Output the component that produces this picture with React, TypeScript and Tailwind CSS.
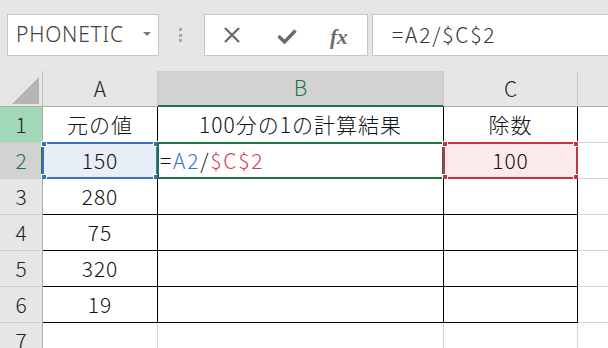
import React from "react";

const CJK = { fontFamily: '"Noto Sans CJK JP", "Noto Sans", sans-serif' };

type CellProps = {
  w: string;
  children?: React.ReactNode;
  border?: "black" | "grey";
  extra?: string;
  overlay?: React.ReactNode;
  align?: "center" | "left";
};

function Cell({ w, children, border = "black", extra = "", overlay, align = "center" }: CellProps) {
  const b = border === "black" ? "border-black" : "border-[#d4d4d4]";
  return (
    <div
      className={`relative h-full shrink-0 border-r border-b ${b} ${w} ${extra} flex items-center ${
        align === "center" ? "justify-center" : "justify-start pl-[2px]"
      } text-[21px] tracking-[1px] font-light text-[#111]`}
      style={CJK}
    >
      {children}
      {overlay}
    </div>
  );
}

function RowHead({ n, variant }: { n: number; variant?: "green" | "sel" }) {
  const bg = variant === "green" ? "bg-[#a0d8b8]" : variant === "sel" ? "bg-[#d2d2d2]" : "bg-[#e6e6e6]";
  const color = variant === "sel" ? "text-[#217346]" : "text-[#222]";
  return (
    <div
      className={`relative h-full w-[43px] shrink-0 border-r border-b border-r-[#ababab] border-b-[#cfcfcf] ${bg} ${color} flex items-center justify-center text-[21px] font-light`}
      style={CJK}
    >
      {n}
      {variant === "sel" && <div className="absolute right-[-1px] top-0 bottom-[-1px] w-[2px] bg-[#217346]" />}
    </div>
  );
}

function Handles({ color }: { color: string }) {
  const base = `absolute w-[6px] h-[6px] ${color} border border-white`;
  return (
    <>
      <div className={`${base} left-[-3px] top-[-3px]`} />
      <div className={`${base} right-[-3px] top-[-3px]`} />
      <div className={`${base} left-[-3px] bottom-[-3px]`} />
      <div className={`${base} right-[-3px] bottom-[-3px]`} />
    </>
  );
}

export default function App() {
  const data = [
    { n: 3, a: "280" },
    { n: 4, a: "75" },
    { n: 5, a: "320" },
    { n: 6, a: "19" },
  ];
  return (
    <div className="w-[608px] h-[348px] overflow-hidden bg-white flex flex-col">
      {/* Toolbar */}
      <div className="h-[71px] shrink-0 bg-[#e6e6e6] flex items-start pt-[14px] pl-[7px] overflow-hidden">
        <div className="w-[152px] h-[42px] shrink-0 bg-white border border-[#c6c6c6] flex items-center pl-[8px] relative">
          <span
            className="text-[21px] text-[#404040] tracking-[0.8px] font-light"
            style={{ fontFamily: '"Noto Sans", "Liberation Sans", sans-serif' }}
          >
            PHONETIC
          </span>
          <div className="absolute left-[135px] top-[17px] w-0 h-0 border-l-[4px] border-r-[4px] border-t-[4px] border-l-transparent border-r-transparent border-t-[#7a7a7a]" />
        </div>
        <div className="w-[45px] h-[42px] shrink-0 flex flex-col items-center justify-center gap-[2.5px] pr-[2px]">
          <div className="w-[3px] h-[3px] bg-[#a6a6a6]" />
          <div className="w-[3px] h-[3px] bg-[#a6a6a6]" />
          <div className="w-[3px] h-[3px] bg-[#a6a6a6]" />
        </div>
        <div className="w-[164px] h-[42px] shrink-0 bg-white border border-[#c6c6c6] flex items-center relative">
          <svg className="absolute left-[18px] top-[12px]" width="18" height="16" viewBox="0 0 18 16">
            <path d="M2 1 L16 15 M16 1 L2 15" stroke="#6b6b6b" strokeWidth="2.3" fill="none" />
          </svg>
          <svg className="absolute left-[72px] top-[13px]" width="20" height="16" viewBox="0 0 20 16">
            <path d="M1.5 8 L7.5 14 L18.5 2.5" stroke="#6b6b6b" strokeWidth="3.4" fill="none" strokeLinejoin="miter" />
          </svg>
          <span
            className="absolute left-[125px] top-[7px] text-[21px] italic font-bold text-[#6b6b6b]"
            style={{ fontFamily: '"Liberation Serif", "DejaVu Serif", serif' }}
          >
            fx
          </span>
        </div>
        <div className="ml-[4px] w-[260px] h-[42px] shrink-0 bg-white border border-[#c6c6c6] flex items-center pl-[19px]">
          <span className="text-[21px] tracking-[1.8px] font-light text-[#333]" style={CJK}>
            =A2/$C$2
          </span>
        </div>
      </div>

      {/* Column header */}
      <div className="h-[36px] shrink-0 flex bg-[#e6e6e6]">
        <div className="relative w-[43px] h-full shrink-0 border-r border-b border-r-[#bdbdbd] border-b-[#ababab]">
          <svg className="absolute left-[11px] top-[5px]" width="29" height="29" viewBox="0 0 29 29">
            <polygon points="28,1 28,28 1,28" fill="#b4b4b4" />
          </svg>
        </div>
        <div className="w-[115px] h-full shrink-0 border-r border-b border-r-[#c6c6c6] border-b-[#ababab] flex items-center justify-center text-[21px] font-light text-[#222]" style={CJK}>
          A
        </div>
        <div className="w-[286px] h-full shrink-0 border-r border-r-[#c6c6c6] bg-[#d2d2d2] border-b-2 border-b-[#217346] flex items-center justify-center text-[21px] font-light text-[#217346]" style={CJK}>
          B
        </div>
        <div className="w-[134px] h-full shrink-0 border-r border-b border-r-[#c6c6c6] border-b-[#ababab] flex items-center justify-center text-[21px] font-light text-[#222]" style={CJK}>
          C
        </div>
        <div className="flex-1 h-full border-b border-b-[#ababab]" />
      </div>

      {/* Row 1 */}
      <div className="h-[36px] shrink-0 flex">
        <RowHead n={1} variant="green" />
        <Cell w="w-[115px]">元の値</Cell>
        <Cell w="w-[286px]">100分の1の計算結果</Cell>
        <Cell w="w-[134px]">除数</Cell>
        <div className="flex-1 h-full border-b border-[#d4d4d4]" />
      </div>

      {/* Row 2 */}
      <div className="h-[36px] shrink-0 flex">
        <RowHead n={2} variant="sel" />
        <Cell
          w="w-[115px]"
          extra="bg-[#e8eef8]"
          overlay={
            <div className="absolute left-[-1px] top-[-1px] right-[-1px] bottom-[-1px] border-2 border-[#3b6fc6] pointer-events-none">
              <Handles color="bg-[#3b6fc6]" />
            </div>
          }
        >
          150
        </Cell>
        <Cell
          w="w-[286px]"
          align="left"
          overlay={
            <div className="absolute left-[-1px] top-[-1px] right-[-1px] bottom-[-1px] border-2 border-[#217346] pointer-events-none" />
          }
        >
          <span className="tracking-[1.8px]">=</span>
          <span className="tracking-[1.8px] text-[#3f75cf]">A2</span>
          <span className="tracking-[1.8px]">/</span>
          <span className="tracking-[1.8px] text-[#cf3f4c]">$C$2</span>
        </Cell>
        <Cell
          w="w-[134px]"
          extra="bg-[#fbeaea]"
          overlay={
            <div className="absolute left-[-1px] top-[-1px] right-[-1px] bottom-[-1px] border-2 border-[#c8323f] pointer-events-none">
              <Handles color="bg-[#c8323f]" />
            </div>
          }
        >
          100
        </Cell>
        <div className="flex-1 h-full border-b border-[#d4d4d4]" />
      </div>

      {data.map((r) => (
        <div key={r.n} className="h-[36px] shrink-0 flex">
          <RowHead n={r.n} />
          <Cell w="w-[115px]">{r.a}</Cell>
          <Cell w="w-[286px]" />
          <Cell w="w-[134px]" />
          <div className="flex-1 h-full border-b border-[#d4d4d4]" />
        </div>
      ))}

      {/* Row 7 */}
      <div className="h-[36px] shrink-0 flex">
        <RowHead n={7} />
        <Cell w="w-[115px]" border="grey" />
        <Cell w="w-[286px]" border="grey" />
        <Cell w="w-[134px]" border="grey" />
        <div className="flex-1 h-full border-b border-[#d4d4d4]" />
      </div>
    </div>
  );
}
